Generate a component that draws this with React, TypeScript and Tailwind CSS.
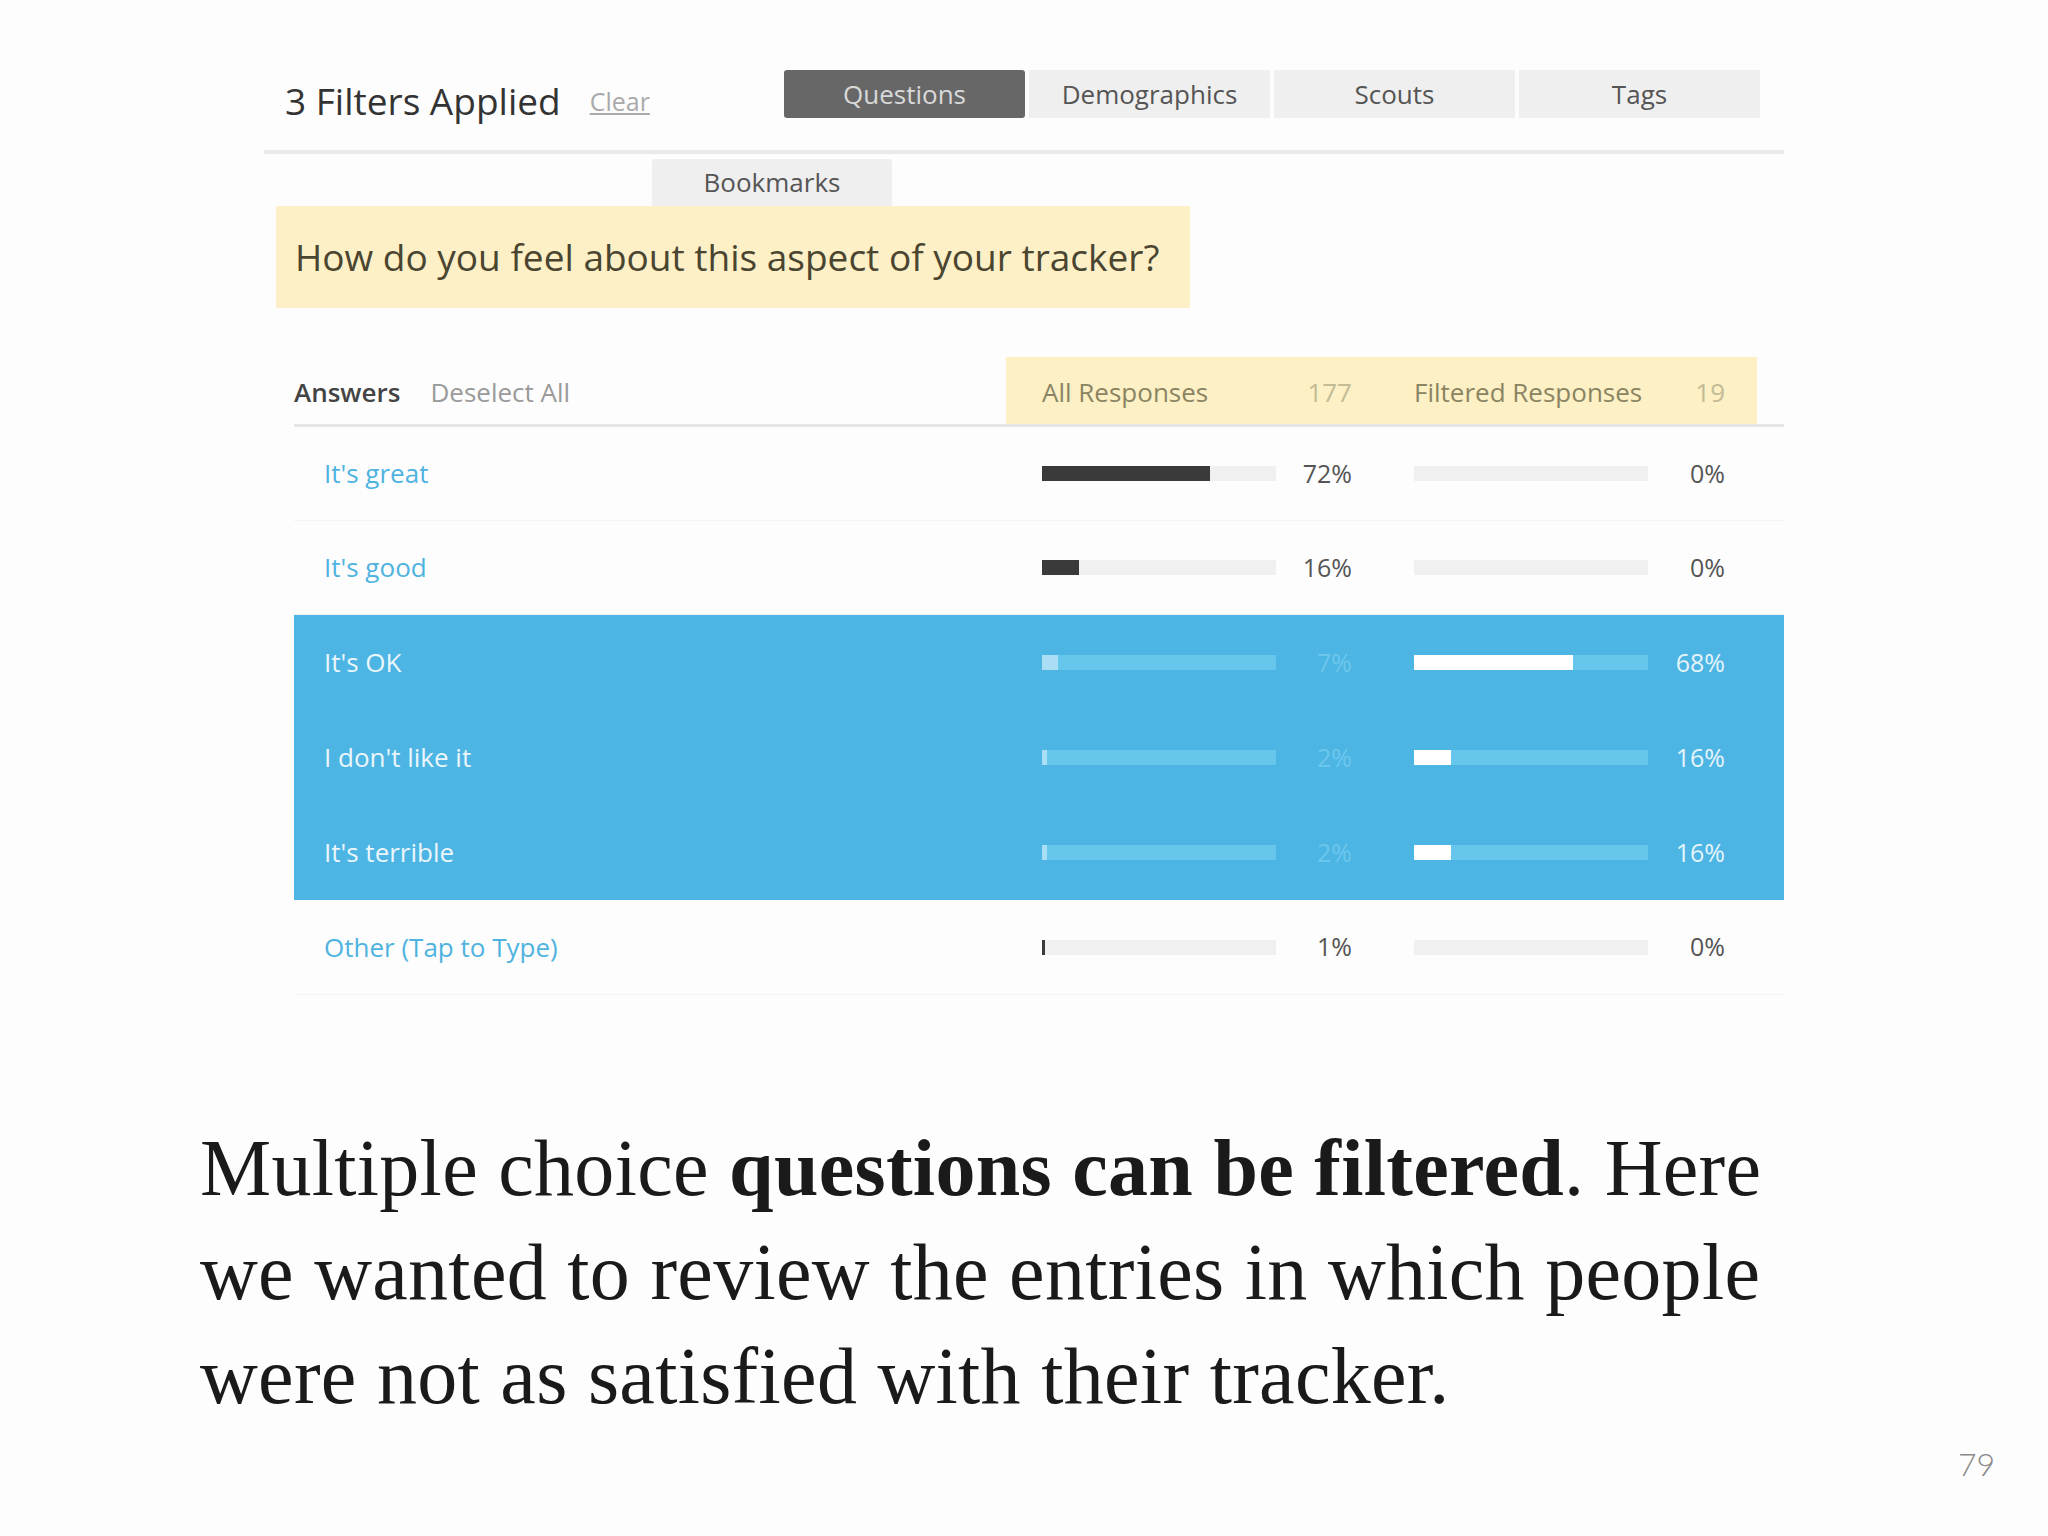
import React from "react";

type Row = {
  label: string;
  all: string;
  allP: number;
  filt: string;
  filtP: number;
  sel: boolean;
};

const rows: Row[] = [
  { label: "It's great", all: "72%", allP: 72, filt: "0%", filtP: 0, sel: false },
  { label: "It's good", all: "16%", allP: 16, filt: "0%", filtP: 0, sel: false },
  { label: "It's OK", all: "7%", allP: 7, filt: "68%", filtP: 68, sel: true },
  { label: "I don't like it", all: "2%", allP: 2, filt: "16%", filtP: 16, sel: true },
  { label: "It's terrible", all: "2%", allP: 2, filt: "16%", filtP: 16, sel: true },
  { label: "Other (Tap to Type)", all: "1%", allP: 1, filt: "0%", filtP: 0, sel: false },
];

const sans = { fontFamily: '"Open Sans", "Noto Sans", sans-serif' };

function Bar({ p, sel, kind }: { p: number; sel: boolean; kind: "all" | "filt" }) {
  const track = sel ? "bg-[#66c6ec]" : "bg-[#f0f0f0]";
  const fill = sel ? (kind === "all" ? "bg-[#a9def5]" : "bg-white") : "bg-[#3a3a3a]";
  const w = p > 0 ? Math.max(3, Math.round((234 * p) / 100)) : 0;
  return (
    <div className={`w-[234px] h-[15px] flex ${track}`}>
      {w > 0 && <div className={`h-full ${fill}`} style={{ width: w }} />}
    </div>
  );
}

function TableRow({ r, i }: { r: Row; i: number }) {
  const h = i < 2 ? "h-[94px]" : "h-[95px]";
  const bg = r.sel ? "bg-[#4db5e3]" : "bg-transparent border-b border-[#f4f4f4]";
  return (
    <div className={`flex items-center ${h} ${bg}`}>
      <div
        className={`w-[712px] pl-[30px] text-[26px] ${r.sel ? "text-[#eaf6fc]" : "text-[#4fb3e0]"}`}
      >
        {r.label}
      </div>
      <div className="w-[751px] flex items-center pl-[36px]">
        <Bar p={r.allP} sel={r.sel} kind="all" />
        <div
          className={`w-[76px] text-right text-[25px] ${r.sel ? "text-[#6cc7ec]" : "text-[#555555]"}`}
        >
          {r.all}
        </div>
        <div className="w-[62px]" />
        <Bar p={r.filtP} sel={r.sel} kind="filt" />
        <div
          className={`w-[77px] text-right text-[25px] ${r.sel ? "text-[#e4f4fb]" : "text-[#555555]"}`}
        >
          {r.filt}
        </div>
      </div>
    </div>
  );
}

export default function App() {
  return (
    <div className="w-[2048px] h-[1536px] bg-[#fdfdfd] relative overflow-hidden">
      <div style={sans} className="ml-[264px] w-[1520px] pt-[70px]">
        {/* header row */}
        <div className="flex items-center h-[48px]">
          <div className="ml-[21px] mt-[12px] text-[37px] text-[#333333] leading-none">3 Filters Applied</div>
          <div className="ml-[29px] mt-[14px] text-[25px] text-[#aaaaaa] underline leading-none">Clear</div>
          <div className="ml-auto mr-[24px] flex gap-[4px]">
            <div className="w-[241px] h-[48px] rounded-[3px] bg-[#676767] text-[#d9d9d9] text-[26px] flex items-center justify-center">
              Questions
            </div>
            <div className="w-[241px] h-[48px] bg-[#efefef] text-[#555555] text-[26px] flex items-center justify-center">
              Demographics
            </div>
            <div className="w-[241px] h-[48px] bg-[#efefef] text-[#555555] text-[26px] flex items-center justify-center">
              Scouts
            </div>
            <div className="w-[241px] h-[48px] bg-[#efefef] text-[#555555] text-[26px] flex items-center justify-center">
              Tags
            </div>
          </div>
        </div>
        {/* divider */}
        <div className="mt-[32px] h-[4px] bg-[#e9e9e9]" />
        {/* bookmarks */}
        <div className="mt-[5px] ml-[388px] w-[240px] h-[47px] rounded-t-[3px] bg-[#efefef] text-[#555555] text-[26px] flex items-center justify-center">
          Bookmarks
        </div>
        {/* question */}
        <div className="ml-[12px] w-[914px] h-[102px] bg-[#fdf0c6] flex items-center pl-[19px] text-[37px] text-[#4a4530]">
          How do you feel about this aspect of your tracker?
        </div>
      </div>

      {/* table */}
      <div style={sans} className="ml-[294px] w-[1490px] mt-[49px]">
        <div className="flex h-[67px] border-b-[3px] border-[#e6e6e6] box-content">
          <div className="w-[712px] flex items-center pt-[4px]">
            <span className="text-[26px] font-semibold text-[#444444]">Answers</span>
            <span className="ml-[30px] text-[26px] text-[#9a9a9a]">Deselect All</span>
          </div>
          <div className="w-[751px] bg-[#fcf0c4] flex items-center pt-[4px] pl-[36px] text-[26px]">
            <div className="w-[234px] text-[#8a8462]">All Responses</div>
            <div className="w-[76px] text-right text-[#c2bb96]">177</div>
            <div className="w-[62px]" />
            <div className="w-[234px] text-[#8a8462] whitespace-nowrap">Filtered Responses</div>
            <div className="w-[77px] text-right text-[#c2bb96]">19</div>
          </div>
        </div>
        {rows.map((r, i) => (
          <TableRow key={i} r={r} i={i} />
        ))}
      </div>

      {/* paragraph */}
      <div
        className="ml-[200px] mt-[121px] text-[80px] leading-[104px] text-[#1a1a1a] whitespace-nowrap tracking-[0.3px]"
        style={{ fontFamily: '"Liberation Serif", "DejaVu Serif", serif' }}
      >
        Multiple choice <span className="font-bold">questions can be filtered</span>. Here
        <br />
        we wanted to review the entries in which people
        <br />
        were not as satisfied with their tracker.
      </div>

      <div
        className="absolute left-[1958px] top-[1440px] text-[32px] font-light text-[#8a8a8a]"
        style={{ fontFamily: "Lato, sans-serif" }}
      >
        79
      </div>
    </div>
  );
}
